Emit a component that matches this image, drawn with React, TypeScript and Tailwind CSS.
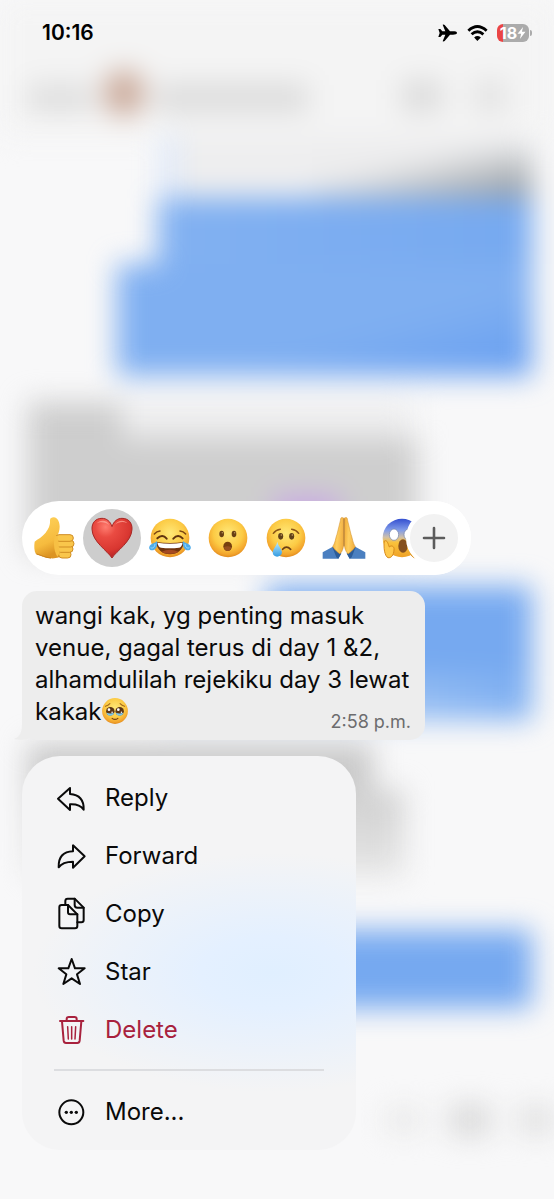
import type { ReactNode } from 'react';

function Face({ id, children }: { id: string; children: ReactNode }) {
  return (
    <>
      <defs>
        <radialGradient id={id} cx="50%" cy="38%" r="62%">
          <stop offset="0" stopColor="#ffe878" />
          <stop offset="0.6" stopColor="#fccb45" />
          <stop offset="0.88" stopColor="#f3a52c" />
          <stop offset="1" stopColor="#e08a1e" />
        </radialGradient>
      </defs>
      <circle cx="63" cy="63" r="58" fill={`url(#${id})`} />
      {children}
    </>
  );
}

function Emoji({ children, className = 'size-[42px]' }: { children: ReactNode; className?: string }) {
  return (
    <svg viewBox="0 0 126 126" className={className} aria-hidden="true">
      {children}
    </svg>
  );
}

function ThumbsUp() {
  return (
    <Emoji>
      <defs>
        <linearGradient id="thumb" x1="0" y1="0" x2="0.3" y2="1">
          <stop offset="0" stopColor="#ffd45c" />
          <stop offset="0.7" stopColor="#f6bb3e" />
          <stop offset="1" stopColor="#dc9424" />
        </linearGradient>
      </defs>
      <path d="M5 74C14 66 28 60 38 47C46 37 52 26 51 10C51 3 56 1 62 1C75 2 80 17 80 29C80 40 76 50 73 57L84 112C83 122 70 125 52 124C34 123 24 115 9 112C3 102 3 86 5 74Z" fill="url(#thumb)" />
      <g fill="#f9c64b" stroke="#d08d24" strokeWidth="3">
        <rect x="77" y="102" width="37" height="21" rx="10" />
        <rect x="72" y="86" width="48" height="20" rx="10" />
        <rect x="70" y="70" width="53" height="20" rx="10" />
        <rect x="68" y="53" width="53" height="20" rx="10" />
      </g>
      <path d="M66 56C61 68 61 101 73 119L80 108L74 58Z" fill="#f7c044" />
      <path d="M11 111C25 115 36 122 54 123" stroke="#c9811c" strokeWidth="3" fill="none" />
    </Emoji>
  );
}

function Heart() {
  return (
    <Emoji>
      <defs>
        <radialGradient id="heart" cx="34%" cy="22%" r="85%">
          <stop offset="0" stopColor="#ff7d70" />
          <stop offset="0.3" stopColor="#ea4b42" />
          <stop offset="0.7" stopColor="#d93731" />
          <stop offset="1" stopColor="#a91d21" />
        </radialGradient>
      </defs>
      <path d="M63 123C50 102 4 74 3 37C2 17 14 4 33 4C47 4 58 13 63 29C68 13 79 4 93 4C112 4 124 17 123 37C122 74 76 102 63 123Z" fill="url(#heart)" stroke="#a72825" strokeWidth="3" />
      <path d="M16 20C27 6 49 9 55 24C43 15 28 13 16 20ZM72 23C80 9 101 7 109 19C96 12 82 15 72 23Z" fill="#ffaca0" opacity="0.7" />
    </Emoji>
  );
}

function Joy() {
  return (
    <Emoji className="size-[42px] overflow-visible">
      <Face id="joy">
        <path d="M16 51Q23 43 33 42M110 51Q103 43 93 42" stroke="#7d4612" strokeWidth="4.5" strokeLinecap="round" fill="none" />
        <path d="M25 64Q40 50 53 65M73 65Q87 50 101 64" stroke="#60320e" strokeWidth="6" strokeLinecap="round" fill="none" />
        <path d="M21 75Q63 81 105 75C102 98 86 112 63 112C40 112 24 98 21 75Z" fill="#70340f" />
        <path d="M25 77Q63 83 101 77C99 87 94 92 90 92Q63 96 36 92C30 91 27 85 25 77Z" fill="#fff" />
        <path d="M38 104Q62 92 88 104C76 112 50 112 38 104Z" fill="#a54a22" />
        <path d="M24 72C27 87 20 100 9 100C-1 99-2 89 5 83C11 78 19 79 24 72ZM102 72C99 87 106 100 117 100C127 99 128 89 121 83C115 78 107 79 102 72Z" fill="#4faceb" />
        <path d="M18 81C17 92 10 95 5 92M108 81C109 92 116 95 121 92" stroke="#9bdcff" strokeWidth="3" fill="none" />
      </Face>
    </Emoji>
  );
}

function OpenMouth() {
  return (
    <Emoji>
      <Face id="open">
        <ellipse cx="44" cy="51" rx="7" ry="9.5" fill="#684014" />
        <ellipse cx="81" cy="51" rx="7" ry="9.5" fill="#684014" />
        <circle cx="46" cy="47" r="2.3" fill="#b7925b" />
        <circle cx="83" cy="47" r="2.3" fill="#b7925b" />
        <ellipse cx="62" cy="88" rx="13" ry="14" fill="#76400f" />
        <path d="M51 91Q62 84 73 91Q71 102 62 102Q53 102 51 91Z" fill="#955020" />
      </Face>
    </Emoji>
  );
}

function Crying() {
  return (
    <Emoji>
      <defs>
        <linearGradient id="tear" x2="0" y2="1">
          <stop stopColor="#c0edff" />
          <stop offset="1" stopColor="#329be1" />
        </linearGradient>
      </defs>
      <Face id="cry">
        <path d="M25 49Q32 39 46 37M80 37Q94 39 101 49" stroke="#8c5718" strokeWidth="4.5" strokeLinecap="round" fill="none" />
        <ellipse cx="47" cy="58" rx="7.5" ry="10" fill="#604018" />
        <ellipse cx="80" cy="58" rx="7.5" ry="10" fill="#604018" />
        <circle cx="49" cy="54" r="2.5" fill="#cba265" />
        <circle cx="82" cy="54" r="2.5" fill="#cba265" />
        <path d="M53 97Q64 84 77 97" stroke="#6d4015" strokeWidth="5" strokeLinecap="round" fill="none" />
        <path d="M37 74C40 88 51 96 51 106C50 123 23 124 23 106C24 96 34 88 37 74Z" fill="url(#tear)" />
      </Face>
    </Emoji>
  );
}

function Pray() {
  return (
    <Emoji className="size-[42px] overflow-visible">
      <defs>
        <linearGradient id="hand" x1="0" y1="0" x2="1" y2="0.2">
          <stop stopColor="#f0a935" />
          <stop offset="0.5" stopColor="#ffcf60" />
          <stop offset="1" stopColor="#f1b043" />
        </linearGradient>
      </defs>
      <path d="M-1 106L28 90L54 111L46 125H-1ZM127 106L98 90L72 111L80 125H127Z" fill="#4a7fc0" />
      <path d="M28 90L36 88L55 109L46 125L40 121ZM98 90L90 88L71 109L80 125L86 121Z" fill="#2c5c98" />
      <path d="M62 3C54-1 53 3 52 11L42 52C37 64 38 75 29 89C35 99 45 106 51 111C60 101 62 90 62 77Z" fill="url(#hand)" stroke="#cf8a25" strokeWidth="1.5" />
      <path d="M64 3C72-1 73 3 74 11L84 52C89 64 88 75 97 89C91 99 81 106 75 111C66 101 64 90 64 77Z" fill="url(#hand)" stroke="#cf8a25" strokeWidth="1.5" />
      <path d="M63 5V88" stroke="#a96c1c" strokeWidth="2.5" />
    </Emoji>
  );
}

function Scream() {
  return (
    <Emoji>
      <defs>
        <linearGradient id="scream" x2="0" y2="1">
          <stop stopColor="#334fd0" />
          <stop offset="0.3" stopColor="#829de9" />
          <stop offset="0.48" stopColor="#d0c0a8" />
          <stop offset="0.62" stopColor="#fac23b" />
          <stop offset="1" stopColor="#eea126" />
        </linearGradient>
      </defs>
      <circle cx="63" cy="63" r="58" fill="url(#scream)" />
      <ellipse cx="39" cy="53" rx="14" ry="17" fill="#fff" stroke="#7181a6" strokeWidth="2" />
      <ellipse cx="83" cy="53" rx="14" ry="17" fill="#fff" stroke="#7181a6" strokeWidth="2" />
      <ellipse cx="66" cy="87" rx="14" ry="20" fill="#85501e" />
      <path d="M10 72C19 67 21 81 25 90C30 84 41 87 39 99C38 115 30 124 21 122C11 118 7 91 10 72ZM116 72C107 67 105 81 101 90C96 84 85 87 87 99C88 115 96 124 105 122C115 118 119 91 116 72Z" fill="#ffc94c" stroke="#d68a1e" strokeWidth="3" />
    </Emoji>
  );
}

function HoldingTears() {
  return (
    <svg viewBox="0 0 126 126" className="inline-block size-7 align-[-5px]" role="img" aria-label="face holding back tears">
      <Face id="hold">
        <path d="M20 42Q32 39 40 30M106 42Q94 39 86 30" stroke="#a56a1c" strokeWidth="5" strokeLinecap="round" fill="none" />
        <circle cx="42" cy="64" r="19" fill="#5b3515" />
        <circle cx="84" cy="64" r="19" fill="#5b3515" />
        <path d="M25 71Q42 77 59 71Q56 84 42 84Q28 84 25 71ZM67 71Q84 77 101 71Q98 84 84 84Q70 84 67 71Z" fill="#7cc6ea" />
        <circle cx="36" cy="57" r="6" fill="#fff" />
        <circle cx="78" cy="57" r="6" fill="#fff" />
        <circle cx="50" cy="69" r="3.5" fill="#fff" />
        <circle cx="92" cy="69" r="3.5" fill="#fff" />
        <path d="M50 96Q63 106 76 96" stroke="#764111" strokeWidth="5" strokeLinecap="round" fill="none" />
      </Face>
    </svg>
  );
}

const reactions = [
  { label: 'Thumbs up', icon: <ThumbsUp /> },
  { label: 'Love', icon: <Heart />, selected: true },
  { label: 'Laugh', icon: <Joy /> },
  { label: 'Surprised', icon: <OpenMouth /> },
  { label: 'Sad', icon: <Crying /> },
  { label: 'Thanks', icon: <Pray /> },
  { label: 'Shocked', icon: <Scream /> },
];

const actions = [
  { label: 'Reply', icon: <path d="M6 47L42 15V33C69 35 84 51 83 80C74 67 60 63 42 64V81Z" /> },
  { label: 'Forward', icon: <path d="M86 46L51 13V31C23 32 7 48 8 79C17 66 31 62 51 62V80Z" /> },
  {
    label: 'Copy',
    icon: (
      <>
        <path d="M17 18H36L64 46V81Q64 88 57 88H17Q10 88 10 81V25Q10 18 17 18Z" />
        <path d="M36 18V40Q36 46 42 46H64" />
        <path d="M28 18V6Q28 -1 35 -1H56L83 26V63Q83 70 76 70H64" />
        <path d="M56 -1V18Q56 26 64 26H83" />
      </>
    ),
  },
  { label: 'Star', icon: <path d="M47 6L57 34H86L63 52L72 81L47 64L22 81L31 52L8 34H37Z" /> },
  {
    label: 'Delete',
    danger: true,
    icon: (
      <>
        <path d="M12 18H82M32 18V12Q32 6 38 6H56Q62 6 62 12V18" />
        <path d="M18 19L23 77Q24 84 30 84H64Q70 84 71 77L76 19" />
        <path d="M35 35L37 72M47 35V72M59 35L57 72" strokeWidth="4.5" />
      </>
    ),
  },
];

function ActionButton({ label, icon, danger }: { label: string; icon: ReactNode; danger?: boolean }) {
  return (
    <button type="button" className={`flex h-[58px] w-full items-center gap-[19px] px-[34px] text-left ${danger ? 'text-[#a8213d]' : 'text-[#0a0a0a]'}`}>
      <svg viewBox="0 0 90 90" className="size-[30px] shrink-0 overflow-visible" fill="none" stroke="currentColor" strokeWidth="6" strokeLinejoin="round" strokeLinecap="round" aria-hidden="true">
        {icon}
      </svg>
      <span>{label}</span>
    </button>
  );
}

function BlurredChat() {
  return (
    <div className="absolute inset-0 overflow-hidden bg-[#f8f8f9]" aria-hidden="true">
      <div className="flex flex-col blur-[14px]">
        <div className="flex h-[136px] items-end bg-[#f4f4f4] px-7 pb-5">
          <div className="mb-1 h-7 w-16 bg-[#dedede]" />
          <div className="ml-3 h-[46px] w-10 rounded-full bg-[#caa999]" />
          <div className="mb-1 ml-3 h-7 w-[152px] bg-[#dbdbdb]" />
          <div className="mb-1 ml-auto h-8 w-10 bg-[#dbdbdb]" />
          <div className="mr-5 mb-1 ml-8 h-8 w-8 bg-[#e2e2e2]" />
        </div>
        <div className="mr-[22px] flex flex-col items-end">
          <div className="flex h-[62px] w-[370px] justify-end border-l-[14px] border-[#d6e4fa] bg-[#eeeeef] pt-3">
            <div className="h-[50px] w-[220px] bg-linear-to-br from-[#ededee] from-35% to-[#8d949a]" />
          </div>
          <div className="h-[66px] w-[374px] bg-linear-to-r from-[#82b1f1] to-[#76a9f0]" />
          <div className="h-28 w-[415px] bg-linear-to-br from-[#7faff1] from-60% to-[#659df0]" />
        </div>
        <div className="mt-[26px] ml-7 flex flex-col">
          <div className="flex h-9">
            <div className="w-[94px] bg-[#cdcdcd]" />
            <div className="w-[290px] bg-[#ededee]" />
          </div>
          <div className="h-[116px] w-[390px] bg-[#cecece] pt-[58px] pl-[246px]">
            <div className="h-10 w-[66px] bg-[#c9a9e4]" />
          </div>
        </div>
        <div className="mt-8 mr-[22px] flex flex-col items-end">
          <div className="h-[90px] w-[266px] bg-[#76a9f0]" />
          <div className="h-11 w-[370px] bg-linear-to-r from-[#b5d0f4] from-20% to-[#7eaff1]" />
        </div>
        <div className="mt-6 ml-7 flex flex-col">
          <div className="h-[46px] w-[345px] bg-[#c9c9c9]" />
          <div className="h-[86px] w-[376px] bg-linear-to-b from-[#cfcfcf] to-[#e6e6e6]" />
        </div>
        <div className="mt-[54px] mr-[22px] h-[78px] w-[400px] self-end bg-[#76a9f0]" />
        <div className="mt-24 flex items-center justify-end gap-7">
          <div className="h-6 w-9 bg-[#e8e8e8]" />
          <div className="h-8 w-10 bg-[#d9d9d9]" />
          <div className="h-7 w-9 bg-[#e0e0e0]" />
        </div>
      </div>
    </div>
  );
}

function StatusBar() {
  return (
    <header className="flex h-[66px] items-center justify-between pr-[22px] pl-[42px] text-black">
      <time className="text-[21px] leading-6 font-semibold">10:16</time>
      <div className="flex items-center gap-[9px]">
        <svg viewBox="0 0 60 54" className="h-[18px] w-5" aria-label="Airplane mode" role="img">
          <path d="M57 27C57 31 51 32 45 32H36L20 51Q18 53 14 52L22 32H13L7 39H1L5 27L1 15H7L13 22H22L14 2Q18 1 20 3L36 22H45C51 22 57 23 57 27Z" />
        </svg>
        <svg viewBox="0 0 63 50" className="h-4 w-[21px]" fill="none" stroke="#000" strokeWidth="9" aria-label="Wi-Fi" role="img">
          <path d="M3 18Q31 -8 60 18" />
          <path d="M13 29Q31 13 50 29" />
          <path d="M21 39Q31 30 42 39L31 50Z" fill="#000" stroke="none" />
        </svg>
        <div className="flex items-center gap-px">
          <div className="relative flex h-[18px] w-8 items-center justify-center overflow-hidden rounded-[6px] bg-linear-to-r from-[#ea4545] from-20% to-[#ababab] to-20% text-white">
            <span className="text-base leading-[18px] font-bold">18</span>
            <svg viewBox="0 0 20 30" className="h-3 w-[9px]" fill="currentColor" aria-hidden="true">
              <path d="M14 0L0 17H9L6 30L20 12H11Z" />
            </svg>
          </div>
          <div className="h-[6px] w-[2px] rounded-r-full bg-[#ababab]" />
        </div>
      </div>
    </header>
  );
}

export default function App() {
  return (
    <div className="relative min-h-screen font-['Inter','Liberation_Sans',sans-serif]">
      <BlurredChat />
      <div className="relative flex min-h-screen flex-col">
        <StatusBar />
        <main className="flex flex-1 flex-col items-start justify-end gap-4 px-[22px] pb-[49px]">
          <div className="relative h-[74px] w-[449px] max-w-full overflow-hidden rounded-full bg-white px-[3px]">
            <div className="flex h-full items-center">
              {reactions.map((r) => (
                <button key={r.label} type="button" aria-label={r.label} className={`flex size-[58px] shrink-0 items-center justify-center rounded-full ${r.selected ? 'bg-[#cdcdcd]' : ''}`}>
                  {r.icon}
                </button>
              ))}
            </div>
            <div className="absolute inset-y-0 right-0 flex w-12 items-center justify-end bg-white pr-[9px]">
              <button type="button" aria-label="More reactions" className="flex size-14 shrink-0 items-center justify-center rounded-full border-4 border-white bg-[#f2f2f2]">
                <svg viewBox="0 0 24 24" className="size-6" stroke="#5c5c5c" strokeWidth="2.6" strokeLinecap="round" aria-hidden="true">
                  <path d="M12 2V22M2 12H22" />
                </svg>
              </button>
            </div>
          </div>

          <article className="relative w-[403px] max-w-full rounded-[15px] bg-[#ededed] px-[13px] pt-[9px] pb-3 text-[#0a0a0a]">
            <svg viewBox="0 0 24 24" className="absolute bottom-0 -left-2 size-6" fill="#ededed" aria-hidden="true">
              <path d="M8 0V8C8 16 6 21 0 23C8 25 16 23 20 20V0Z" />
            </svg>
            <p className="relative text-2xl leading-8">
              wangi kak, yg penting masuk
              <br />
              venue, gagal terus di day 1 &amp;2,
              <br />
              alhamdulilah rejekiku day 3 lewat
              <br />
              kakak
              <HoldingTears />
            </p>
            <time className="absolute right-[14px] bottom-[6px] text-lg leading-6 text-[#6c6c6e]">2:58 p.m.</time>
          </article>

          <nav aria-label="Message actions" className="w-[334px] max-w-full rounded-[38px] bg-[#f4f4f5] bg-[radial-gradient(ellipse_240px_120px_at_75%_55%,#e0efff_0%,#e4f0ff_30%,#f4f4f500_100%)] pt-[13px] pb-[9px] text-2xl leading-8">
            {actions.map((a) => (
              <ActionButton key={a.label} {...a} />
            ))}
            <hr className="mx-8 mt-[10px] mb-3 border-t-2 border-[#dcdde0]" />
            <ActionButton
              label="More..."
              icon={
                <>
                  <circle cx="46" cy="46" r="36" />
                  <g fill="currentColor" stroke="none">
                    <circle cx="31" cy="46" r="5" />
                    <circle cx="46" cy="46" r="5" />
                    <circle cx="61" cy="46" r="5" />
                  </g>
                </>
              }
            />
          </nav>
        </main>
      </div>
    </div>
  );
}
